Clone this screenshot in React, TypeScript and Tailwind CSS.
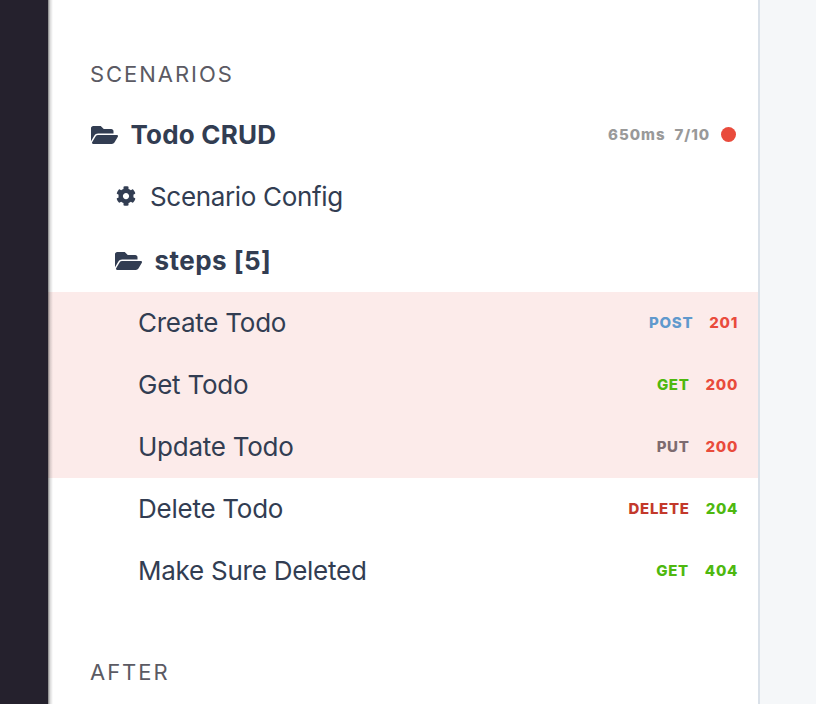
import React from 'react';
import { FaFolderOpen, FaCog } from 'react-icons/fa';

type Step = { name: string; method: string; methodClass: string; code: string; failed: boolean };

const steps: Step[] = [
  { name: 'Create Todo', method: 'POST', methodClass: 'text-[#6099cd] mr-4', code: '201', failed: true },
  { name: 'Get Todo', method: 'GET', methodClass: 'text-[#4eb80f] mr-4', code: '200', failed: true },
  { name: 'Update Todo', method: 'PUT', methodClass: 'text-[#7d6b70] mr-4', code: '200', failed: true },
  { name: 'Delete Todo', method: 'DELETE', methodClass: 'text-[#c3392b] mr-4', code: '204', failed: false },
  { name: 'Make Sure Deleted', method: 'GET', methodClass: 'text-[#4eb80f] mr-4', code: '404', failed: false },
];

const badge = 'pt-px text-[15px] font-extrabold tracking-[0.7px] ';

export default function App() {
  return (
    <div className="flex h-[704px] w-[816px] overflow-hidden bg-white font-['Inter',sans-serif] text-[#323d52]">
      <div className="w-12 shrink-0 bg-[#25212d]" />
      <main className="relative w-[712px] shrink-0 border-r-2 border-[#dae1e9]">
        <div className="absolute inset-y-0 left-0 w-[5px] bg-linear-to-r from-black/50 via-black/15 via-40% to-transparent" />
        <h2 className="mt-[59px] h-[45px] pl-[42px] text-[22px] leading-[30px] tracking-[1.95px] text-[#5b5a63]">SCENARIOS</h2>
        <div className="flex h-[62px] items-center pb-0.5 pl-[42.5px] pr-[22px]">
          <FaFolderOpen className="mt-0.5 mr-[13px] h-6 w-[27px]" />
          <span className="text-[26px] font-bold tracking-[0.2px]">Todo CRUD</span>
          <span className="ml-auto pt-0.5 text-[15px] font-extrabold tracking-[1px] text-[#999]">650ms</span>
          <span className="ml-[9px] pt-0.5 text-[15px] font-extrabold tracking-[0.9px] text-[#999]">7/10</span>
          <span className="ml-[11px] size-[15px] rounded-full bg-[#e94b3c]" />
        </div>
        <div className="flex h-[62px] items-center pb-0.5 pl-[68px]">
          <FaCog className="mr-[14px] size-5" />
          <span className="text-[26px] tracking-[-0.33px]">Scenario Config</span>
        </div>
        <div className="flex h-16 items-center pt-0.5 pl-[66.5px]">
          <FaFolderOpen className="mr-[13px] h-6 w-[27px]" />
          <span className="pb-0.5 text-[26px] font-bold tracking-[0.45px]">steps [5]</span>
        </div>
        {steps.map((s) => (
          <div key={s.name} className={'flex h-[62px] items-center pl-[90px] pr-5 ' + (s.failed ? 'bg-[#fcebea]' : '')}>
            <span className="mr-auto pb-0.5 text-[26px] tracking-[-0.25px]">{s.name}</span>
            <span className={badge + s.methodClass}>{s.method}</span>
            <span className={badge + (s.failed ? 'text-[#e94b3c]' : 'text-[#4eb80f]')}>{s.code}</span>
          </div>
        ))}
        <h2 className="mt-[55px] pl-[42px] text-[22px] leading-[30px] tracking-[1.95px] text-[#5b5a63]">AFTER</h2>
      </main>
      <div className="flex-1 bg-[#f5f7f9]" />
    </div>
  );
}
